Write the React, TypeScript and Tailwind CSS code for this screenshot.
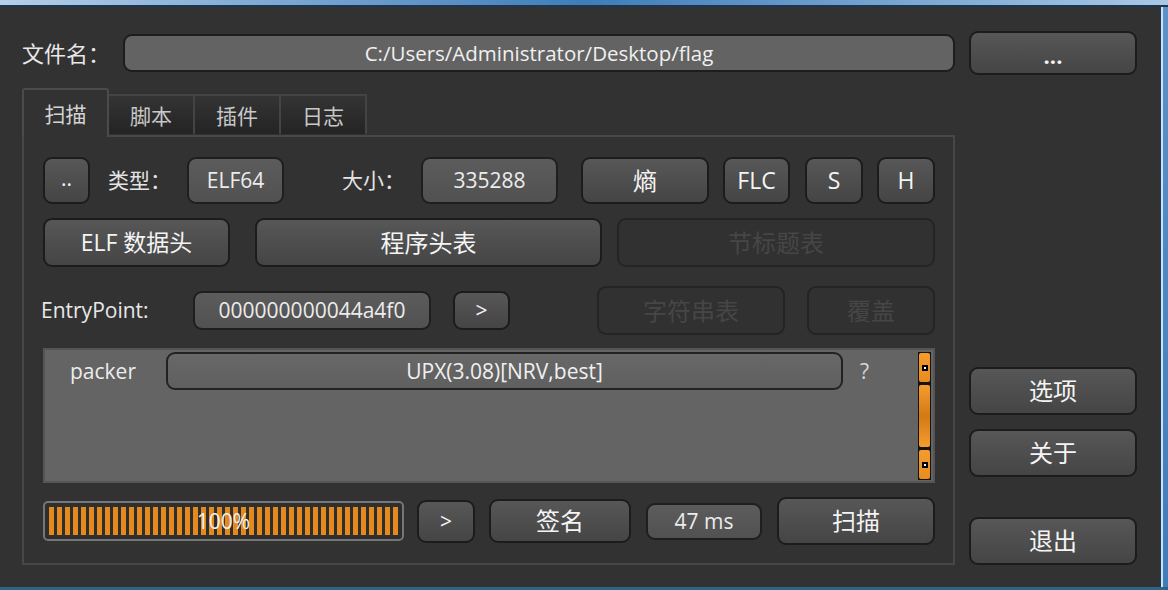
import React from "react";

const btn =
  "flex items-center justify-center rounded-[9px] border-2 border-[#1c1c1c] bg-linear-to-b from-[#575757] to-[#454545] text-[#f4f4f4] shrink-0";
const edit =
  "flex items-center justify-center rounded-[9px] border-2 border-[#1f1f1f] bg-linear-to-b from-[#5c5c5c] to-[#515151] text-[#ececec] text-[21px] shrink-0";
const dis =
  "flex items-center justify-center rounded-[9px] border-2 border-[#242424] bg-[#313131] text-[#464646] text-[24px] shrink-0";

function Dot() {
  return (
    <div className="w-[6px] h-[6px] bg-black flex items-center justify-center">
      <div className="w-[2px] h-[2px] bg-white" />
    </div>
  );
}

function ScrollBar() {
  return (
    <div className="ml-auto w-[13px] h-[128px] bg-[#141414] p-[1px] flex flex-col gap-[3px] shrink-0">
      <div className="h-[29px] rounded-[2px] bg-linear-to-b from-[#f59c2c] to-[#e88c1e] flex items-center justify-center">
        <Dot />
      </div>
      <div className="flex-1 rounded-[2px] bg-linear-to-b from-[#f59d2d] via-[#d47914] to-[#f59d2d]" />
      <div className="h-[29px] rounded-[2px] bg-linear-to-b from-[#f59c2c] to-[#e88c1e] flex items-center justify-center">
        <Dot />
      </div>
    </div>
  );
}

export default function App() {
  return (
    <div className="w-[1168px] h-[590px] flex flex-col overflow-hidden bg-[#323232] font-['Open_Sans','Noto_Sans_CJK_SC',sans-serif] leading-none select-none">
      <div className="h-[5px] shrink-0 bg-linear-to-r from-[#b4cfe8] via-[#3e7dba] to-[#a9c8e4]" />
      <div className="h-[2px] shrink-0 bg-[#1c3650]" />
      <div className="flex flex-1 min-h-0">
        <div className="flex-1 flex flex-col">
          {/* file row */}
          <div className="mt-[24px] h-[44px] flex items-center">
            <div className="w-[123px] pl-[22px] text-[22px] text-[#e8e8e8]">文件名：</div>
            <div className="w-[832px] h-[38px] rounded-[9px] border-2 border-[#1d1d1d] bg-[#636363] flex items-center justify-center text-[20.5px] text-[#f0f0f0] shrink-0">
              C:/Users/Administrator/Desktop/flag
            </div>
            <div className={btn + " ml-[14px] w-[168px] h-[44px] text-[22px] font-bold pt-[3px]"}>...</div>
          </div>

          <div className="mt-[13px] flex">
            {/* left column */}
            <div className="ml-[22px] w-[933px] flex flex-col">
              <div className="flex items-end h-[47px]">
                <div className="relative z-10 w-[87px] h-[49px] -mb-[2px] border-2 border-b-0 border-[#4b4b4b] rounded-t-[3px] bg-[#323232] flex items-center justify-center pt-[2px] text-[21px] text-[#d4d4d4]">
                  扫描
                </div>
                {["脚本", "插件", "日志"].map((t) => (
                  <div
                    key={t}
                    className="w-[86px] h-[40px] mb-[1px] border-t-2 border-r-2 border-[#444444] bg-linear-to-b from-[#343434] to-[#242424] flex items-center justify-center pt-[3px] text-[21px] text-[#c8c8c8]"
                  >
                    {t}
                  </div>
                ))}
              </div>
              <div className="h-[430px] border-2 border-[#474747] flex flex-col pl-[19px] pr-[18px]">
                {/* row A */}
                <div className="mt-[20px] h-[47px] flex items-center">
                  <div className={btn + " w-[47px] h-[47px] text-[21px] pb-[4px]"}>..</div>
                  <div className="ml-[18px] w-[79px] text-[21px] text-[#e4e4e4]">类型：</div>
                  <div className={edit + " w-[97px] h-[47px]"}>ELF64</div>
                  <div className="ml-[58px] w-[79px] text-[21px] text-[#e4e4e4]">大小：</div>
                  <div className={edit + " w-[137px] h-[47px]"}>335288</div>
                  <div className={btn + " ml-[23px] w-[128px] h-[47px] text-[24px]"}>熵</div>
                  <div className={btn + " ml-[14px] w-[67px] h-[47px] text-[23px]"}>FLC</div>
                  <div className={btn + " ml-[15px] w-[58px] h-[47px] text-[23px]"}>S</div>
                  <div className={btn + " ml-[14px] w-[58px] h-[47px] text-[23px]"}>H</div>
                </div>
                {/* row B */}
                <div className="mt-[14px] h-[49px] flex items-center">
                  <div className={btn + " w-[187px] h-[49px] text-[23px]"}>ELF 数据头</div>
                  <div className={btn + " ml-[25px] w-[347px] h-[49px] text-[24px]"}>程序头表</div>
                  <div className={dis + " ml-[15px] w-[318px] h-[49px]"}>节标题表</div>
                </div>
                {/* row C */}
                <div className="mt-[19px] h-[49px] flex items-center">
                  <div className="-ml-[2px] w-[152px] text-[21px] text-[#e8e8e8] shrink-0">EntryPoint:</div>
                  <div className={edit + " w-[238px] h-[39px]"}>000000000044a4f0</div>
                  <div className={btn + " ml-[22px] w-[57px] h-[39px] text-[21px]"}>&gt;</div>
                  <div className={dis + " ml-[87px] w-[188px] h-[49px]"}>字符串表</div>
                  <div className={dis + " ml-[22px] w-[128px] h-[49px]"}>覆盖</div>
                </div>
                {/* result area */}
                <div className="mt-[13px] h-[135px] border-2 border-[#555555] bg-[#646464] flex items-start pt-[2px] pr-[2px]">
                  <div className="w-[121px] h-[38px] pl-[25px] flex items-center text-[21px] text-[#ececec] shrink-0">
                    packer
                  </div>
                  <div className="w-[677px] h-[38px] rounded-[9px] border-2 border-[#222222] bg-linear-to-b from-[#686868] to-[#5f5f5f] flex items-center justify-center text-[21px] text-[#f0f0f0] shrink-0">
                    UPX(3.08)[NRV,best]
                  </div>
                  <div className="ml-[17px] h-[38px] flex items-center text-[21px] text-[#d8d8d8]">?</div>
                  <ScrollBar />
                </div>
                {/* bottom row */}
                <div className="mt-[14px] h-[48px] flex items-center">
                  <div className="relative w-[361px] h-[40px] rounded-[5px] border-2 border-[#767676] bg-[#2e2e2e] p-[4px] shrink-0">
                    <div className="w-full h-full bg-[repeating-linear-gradient(90deg,#e3891d_0px,#e3891d_5px,#2e2e2e_5px,#2e2e2e_8px)]" />
                    <div className="absolute inset-0 flex items-center justify-center text-[21px] text-[#f2f2f2]">100%</div>
                  </div>
                  <div className={btn + " ml-[13px] w-[58px] h-[43px] text-[21px]"}>&gt;</div>
                  <div className={btn + " ml-[14px] w-[142px] h-[44px] text-[24px]"}>签名</div>
                  <div className={edit + " ml-[15px] w-[116px] h-[37px] text-[20px]"}>47 ms</div>
                  <div className={btn + " ml-[15px] w-[158px] h-[48px] text-[24px]"}>扫描</div>
                </div>
              </div>
            </div>
            {/* right column */}
            <div className="ml-[14px] w-[168px] flex flex-col">
              <div className={btn + " mt-[279px] w-[168px] h-[48px] text-[24px]"}>选项</div>
              <div className={btn + " mt-[14px] w-[168px] h-[48px] text-[24px]"}>关于</div>
              <div className={btn + " mt-[40px] w-[168px] h-[48px] text-[24px]"}>退出</div>
            </div>
          </div>
        </div>
        <div className="w-[8px] shrink-0 flex">
          <div className="w-[1px] bg-[#1b3856]" />
          <div className="w-[2px] bg-[#cfe1f2]" />
          <div className="flex-1 bg-linear-to-b from-[#5a92c9] to-[#3f7cbc]" />
        </div>
      </div>
      <div className="h-[3px] shrink-0 bg-[#2e6587]" />
    </div>
  );
}
